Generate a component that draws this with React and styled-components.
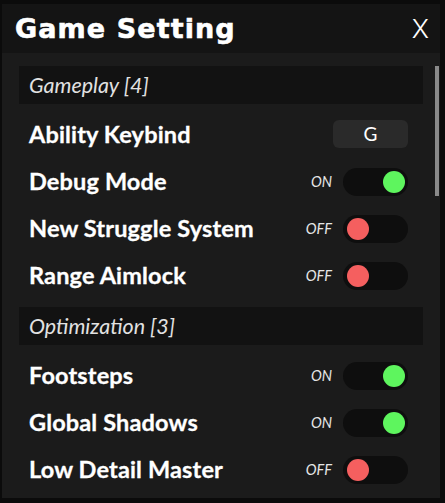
import React from "react";
import styled, { createGlobalStyle } from "styled-components";

const GlobalStyle = createGlobalStyle`
  html, body { margin: 0; padding: 0; background: #0b0b0b; }
  body { font-family: "Lato", "Liberation Sans", sans-serif; }
`;

const Window = styled.div`
  margin: 4px 0 0 2px;
  width: 438px;
  height: 494px;
  background: #1b1b1b;
  display: flex;
  flex-direction: column;
  position: relative;
  overflow: hidden;
`;

const Header = styled.div`
  height: 49px;
  flex: none;
  background: #141414;
  display: flex;
  align-items: center;
  justify-content: space-between;
  padding: 0 11px 0 13px;
`;

const Title = styled.h1`
  margin: 0;
  font-family: "DejaVu Sans", "Inter", sans-serif;
  font-weight: 700;
  font-size: 27px;
  color: #ffffff;
  letter-spacing: 1.1px;
  -webkit-text-stroke: 0.6px #ffffff;
`;

const Close = styled.button`
  border: 0;
  background: transparent;
  padding: 0;
  color: #ffffff;
  font-family: "Inter", "Liberation Sans", sans-serif;
  font-weight: 300;
  font-size: 26px;
  cursor: pointer;
`;

const Body = styled.div`
  flex: 1;
  padding: 13px 17px 0 17px;
  position: relative;
`;

const Scrollbar = styled.div`
  position: absolute;
  right: 1px;
  top: 13px;
  width: 4px;
  height: 130px;
  background: #8a8a8a;
`;

const SectionHeader = styled.div`
  height: 38px;
  background: #121212;
  display: flex;
  align-items: center;
  padding-left: 10px;
  font-style: italic;
  font-size: 21.5px;
  color: #e2e2e2;
  font-weight: 400;
`;

const RowList = styled.div`
  margin: 6px 0 9px 0;
  display: flex;
  flex-direction: column;
`;

const Row = styled.div`
  height: 47px;
  display: flex;
  align-items: center;
  justify-content: space-between;
  padding: 0 15px 0 10px;
`;

const Label = styled.span`
  font-weight: 700;
  font-size: 23.5px;
  color: #ffffff;
  letter-spacing: 0.15px;
  -webkit-text-stroke: 0.3px #ffffff;
`;

const Control = styled.div`
  display: flex;
  align-items: center;
  gap: 11px;
  margin-top: 2px;
`;

const StateText = styled.span`
  font-style: italic;
  font-size: 14.5px;
  color: #e6e6e6;
`;

const Track = styled.div`
  width: 65px;
  height: 28px;
  box-sizing: border-box;
  border-radius: 14px;
  background: #0e0e0e;
  display: flex;
  align-items: center;
  justify-content: ${(p) => (p.$on ? "flex-end" : "flex-start")};
  padding: 0 3px 0 4px;
`;

const Knob = styled.div`
  width: 22px;
  height: 22px;
  border-radius: 50%;
  background: ${(p) => (p.$on ? "#5ef55e" : "#f55f5f")};
`;

const KeyButton = styled.div`
  width: 75px;
  height: 28px;
  border-radius: 6px;
  background: #2a2a2a;
  display: flex;
  align-items: center;
  justify-content: center;
  color: #ffffff;
  font-size: 19px;
`;

const sections = [
  {
    title: "Gameplay [4]",
    items: [
      { label: "Ability Keybind", key: "G" },
      { label: "Debug Mode", on: true },
      { label: "New Struggle System", on: false },
      { label: "Range Aimlock", on: false },
    ],
  },
  {
    title: "Optimization [3]",
    items: [
      { label: "Footsteps", on: true },
      { label: "Global Shadows", on: true },
      { label: "Low Detail Master", on: false },
    ],
  },
];

export default function App() {
  return (
    <>
      <GlobalStyle />
      <Window>
        <Header>
          <Title>Game Setting</Title>
          <Close>X</Close>
        </Header>
        <Body>
          <Scrollbar />
          {sections.map((s) => (
            <div key={s.title}>
              <SectionHeader>{s.title}</SectionHeader>
              <RowList>
                {s.items.map((it) => (
                  <Row key={it.label}>
                    <Label>{it.label}</Label>
                    {it.key ? (
                      <KeyButton>{it.key}</KeyButton>
                    ) : (
                      <Control>
                        <StateText>{it.on ? "ON" : "OFF"}</StateText>
                        <Track $on={it.on}>
                          <Knob $on={it.on} />
                        </Track>
                      </Control>
                    )}
                  </Row>
                ))}
              </RowList>
            </div>
          ))}
        </Body>
      </Window>
    </>
  );
}
